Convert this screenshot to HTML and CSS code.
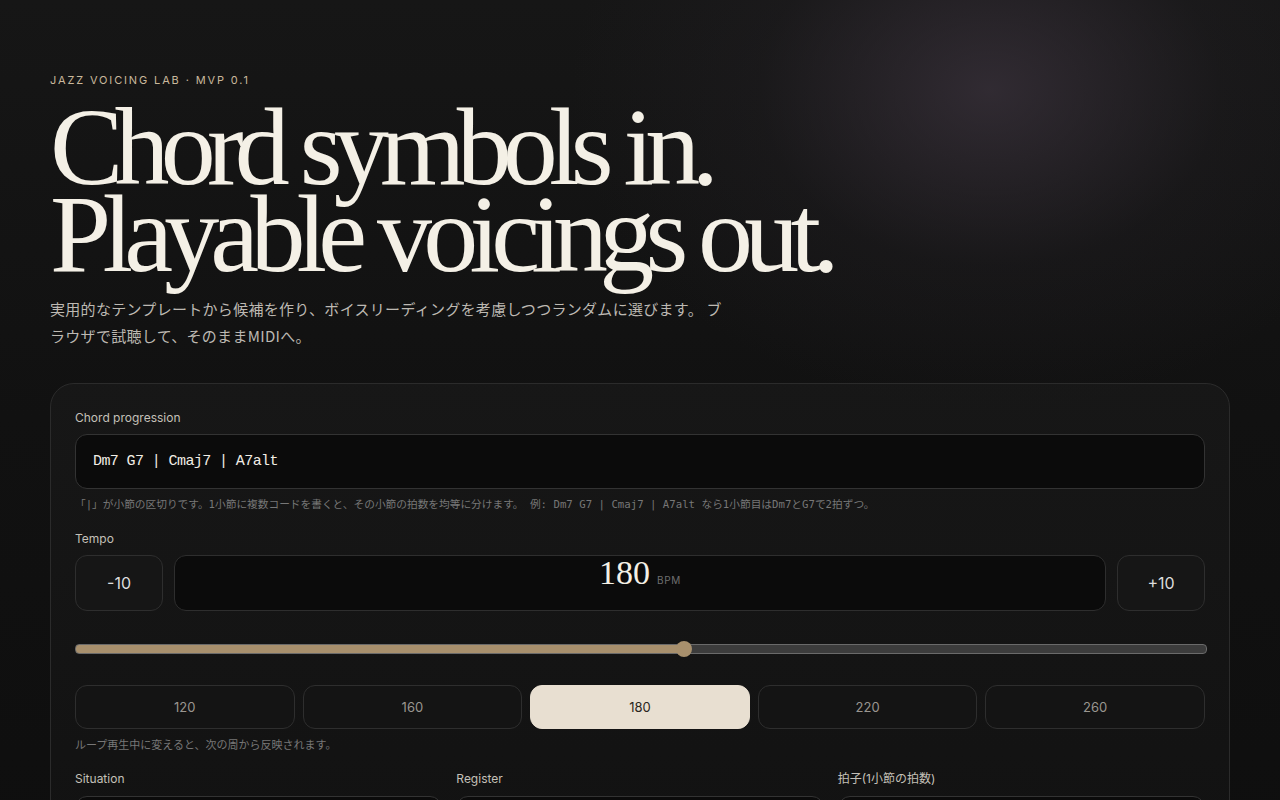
FILE: index.html
```html
<!DOCTYPE html>
<html lang="ja">
<head>
    <meta charset="UTF-8">
    <meta name="viewport" content="width=device-width, initial-scale=1.0">
    <title>Jazz Voicing Lab</title>
    <link rel="stylesheet" href="styles.css">
</head>
<body>
    <main class="page">
        <p class="eyebrow">JAZZ VOICING LAB · MVP 0.1</p>
        <h1 class="hero"><span class="hero-line">Chord symbols in.</span><span class="hero-line">Playable voicings out.</span></h1>
        <p class="lead">実用的なテンプレートから候補を作り、ボイスリーディングを考慮しつつランダムに選びます。 ブラウザで試聴して、そのままMIDIへ。</p>

        <section class="card">
            <label class="field-label" for="progression">Chord progression</label>
            <input class="chord-input" id="progression" type="text" value="Dm7 G7 | Cmaj7 | A7alt">
            <p class="hint">「|」が小節の区切りです。1小節に複数コードを書くと、その小節の拍数を均等に分けます。 例: Dm7 G7 | Cmaj7 | A7alt なら1小節目はDm7とG7で2拍ずつ。</p>

            <div class="field-label tempo-label">Tempo</div>
            <div class="tempo-row">
                <button class="step-btn" type="button">-10</button>
                <div class="tempo-display">
                    <span class="bpm-value">180</span>
                    <span class="bpm-unit">BPM</span>
                </div>
                <button class="step-btn" type="button">+10</button>
            </div>

            <input class="tempo-slider" type="range" min="40" max="300" value="180">

            <div class="presets">
                <button class="preset" type="button">120</button>
                <button class="preset" type="button">160</button>
                <button class="preset active" type="button">180</button>
                <button class="preset" type="button">220</button>
                <button class="preset" type="button">260</button>
            </div>
            <p class="note">ループ再生中に変えると、次の周から反映されます。</p>

            <div class="options">
                <div class="option">
                    <label class="field-label" for="situation">Situation</label>
                    <select id="situation" class="select"><option>Comping</option></select>
                </div>
                <div class="option">
                    <label class="field-label" for="register">Register</label>
                    <select id="register" class="select"><option>Mid</option></select>
                </div>
                <div class="option">
                    <label class="field-label" for="meter">拍子(1小節の拍数)</label>
                    <select id="meter" class="select"><option>4</option></select>
                </div>
            </div>
        </section>
    </main>
</body>
</html>
```

FILE: styles.css
```css
html { background: #0f0f0f; }
body {
    margin: 0;
    min-height: 100vh;
    color: #f2eee6;
    font-family: Inter, "Noto Sans CJK JP", sans-serif;
    background:
        radial-gradient(ellipse 420px 320px at 990px 90px, rgba(58, 50, 60, 0.75), rgba(40, 36, 42, 0.25) 55%, transparent 100%),
        linear-gradient(180deg, #161616 0%, #111 45%, #0e0e0e 100%);
}
.page { padding: 72px 50px 40px; }

.eyebrow { margin: 0; font-size: 11px; letter-spacing: 0.17em; color: #c9b89c; line-height: 16px; }
.hero {
    margin: 14px 0 0;
    padding-top: 2px;
    font-family: "Liberation Serif", serif;
    font-weight: 400;
    font-size: 110px;
    letter-spacing: -0.08em;
    color: #f4f0e6;
}
.hero-line { display: block; height: 87px; line-height: 87px; }
.lead {
    margin: 17px 0 0;
    max-width: 680px;
    font-family: "Noto Sans CJK JP", sans-serif;
    font-size: 15px;
    line-height: 27px;
    letter-spacing: 0.3px;
    color: #bdb9b2;
}

.card {
    margin-top: 34px;
    padding: 26px 24px 40px;
    border: 1px solid #2b2b2b;
    border-radius: 24px;
    background: linear-gradient(180deg, rgba(24, 24, 24, 0.85), rgba(18, 18, 18, 0.9));
}
.field-label { display: block; font-size: 12px; line-height: 16px; color: #c4c0b8; }
.chord-input {
    display: block;
    box-sizing: border-box;
    width: 100%;
    height: 55px;
    margin-top: 8px;
    padding: 0 17px;
    border: 1px solid #333;
    border-radius: 12px;
    background: #0b0b0b;
    color: #f2eee6;
    font-family: "Liberation Mono", monospace;
    font-size: 15px;
    letter-spacing: -0.6px;
    outline: none;
}
.hint {
    margin: 8px 0 0;
    font-family: "DejaVu Sans Mono", "Noto Sans CJK JP", monospace;
    font-size: 10.7px;
    line-height: 16px;
    color: #777;
}
.tempo-label { margin-top: 18px; }
.tempo-row { display: flex; gap: 11px; margin-top: 8px; height: 56px; }
.step-btn {
    width: 88px;
    border: 1px solid #2e2e2e;
    border-radius: 12px;
    background: #161616;
    color: #ddd;
    font-family: Inter, sans-serif;
    font-size: 16px;
}
.tempo-display {
    flex: 1;
    display: flex;
    justify-content: center;
    align-items: baseline;
    gap: 7px;
    border: 1px solid #2e2e2e;
    border-radius: 12px;
    background: #0b0b0b;
}
.bpm-value { font-family: "Liberation Serif", serif; font-size: 34px; line-height: 33px; color: #f4f0e6; }
.bpm-unit { font-size: 10px; letter-spacing: 0.06em; color: #6f6f6f; }

.tempo-slider {
    -webkit-appearance: none;
    appearance: none;
    display: block;
    width: 100%;
    height: 8px;
    margin: 33px 0 0;
    border: 1px solid #6a6a6a;
    border-radius: 4px;
    background: linear-gradient(90deg, #a8906d 0%, #a8906d 54%, #3c3c3c 54%, #3c3c3c 100%);
}
.tempo-slider::-webkit-slider-thumb {
    -webkit-appearance: none;
    width: 16px;
    height: 16px;
    border-radius: 50%;
    background: #a8906d;
}

.presets { display: grid; grid-template-columns: repeat(5, 1fr); gap: 8px; margin-top: 31px; }
.preset {
    height: 44px;
    border: 1px solid #2e2e2e;
    border-radius: 12px;
    background: #141414;
    color: #9a9690;
    font-family: Inter, sans-serif;
    font-size: 13px;
}
.preset.active { background: #e8dfd1; border-color: #e8dfd1; color: #2a2520; }
.note {
    margin: 7px 0 0;
    font-family: "Noto Sans CJK JP", sans-serif;
    font-size: 11px;
    line-height: 16px;
    color: #777;
}

.options { display: grid; grid-template-columns: repeat(3, 1fr); gap: 14px; margin-top: 19px; }
.select {
    display: block;
    width: 100%;
    height: 48px;
    margin-top: 9px;
    border: 1px solid #333;
    border-radius: 12px;
    background: #0b0b0b;
    color: #f2eee6;
}
```
